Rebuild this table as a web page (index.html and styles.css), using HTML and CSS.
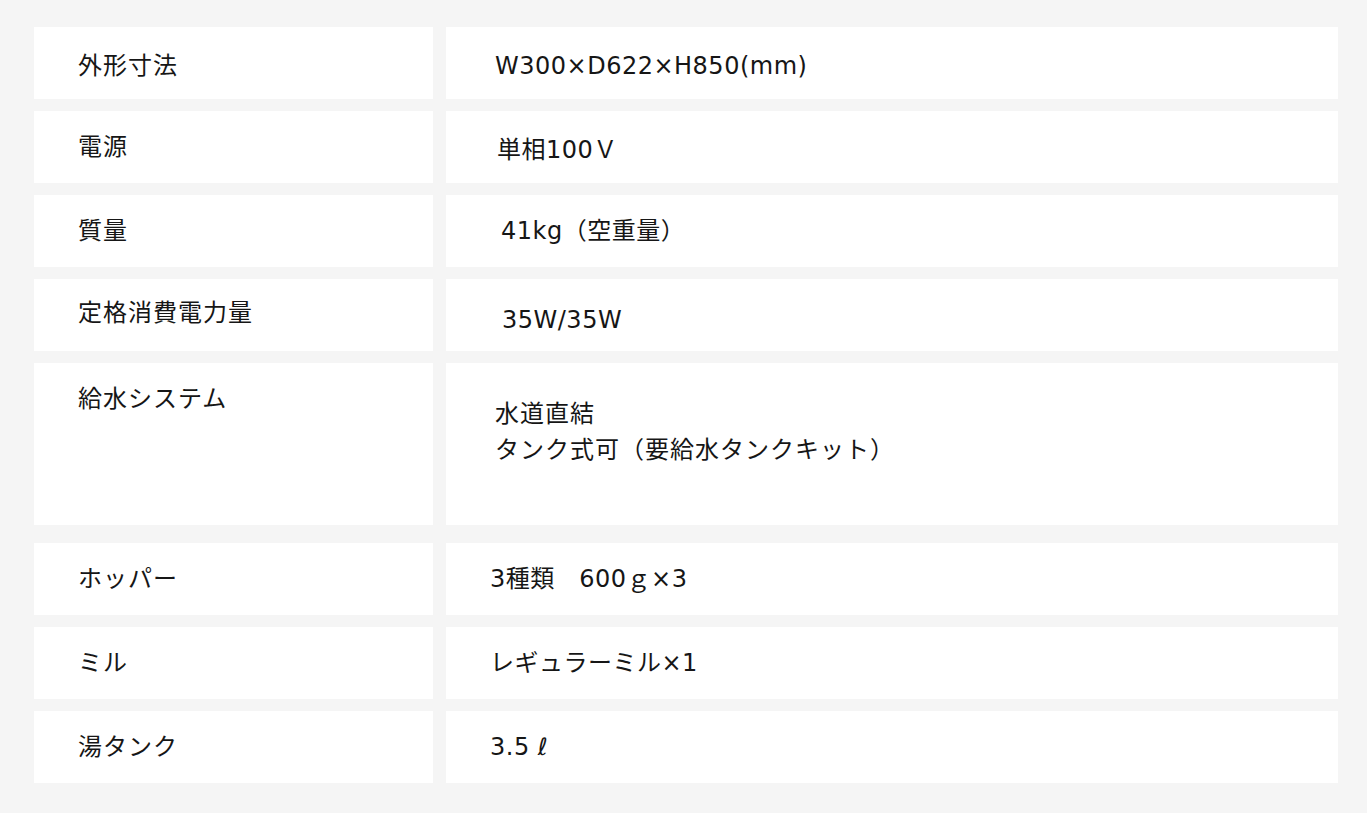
FILE: index.html
```html
<!DOCTYPE html>
<html lang="ja">
<head>
<meta charset="utf-8">
<title>仕様</title>
<link rel="stylesheet" href="styles.css">
</head>
<body>
<div class="spec">
  <div class="spec-row">
    <div class="cell label shift-down">外形寸法</div>
    <div class="cell value shift-down ind-5">W300×D622×H850(mm)</div>
  </div>
  <div class="spec-row">
    <div class="cell label">電源</div>
    <div class="cell value shift-down ind-7">単相100Ｖ</div>
  </div>
  <div class="spec-row">
    <div class="cell label">質量</div>
    <div class="cell value ind-11">41kg（空重量）</div>
  </div>
  <div class="spec-row">
    <div class="cell label shift-up">定格消費電力量</div>
    <div class="cell value shift-down2 ind-12">35W/35W</div>
  </div>
  <div class="spec-row spec-row--tall">
    <div class="cell label label--top">給水システム</div>
    <div class="cell value value--multi ind-5">水道直結<br>タンク式可（要給水タンクキット）</div>
  </div>
  <div class="spec-row">
    <div class="cell label">ホッパー</div>
    <div class="cell value">3種類　600ｇ×3</div>
  </div>
  <div class="spec-row">
    <div class="cell label">ミル</div>
    <div class="cell value">レギュラーミル×1</div>
  </div>
  <div class="spec-row">
    <div class="cell label">湯タンク</div>
    <div class="cell value">3.5 ℓ</div>
  </div>
</div>
</body>
</html>
```

FILE: styles.css
```css
html, body {
  margin: 0;
  padding: 0;
}
body {
  background: #f5f5f5;
  font-family: "DejaVu Sans", "Noto Sans CJK JP", sans-serif;
  color: #161616;
  font-size: 24px;
  letter-spacing: 0.5px;
}
.spec {
  display: flex;
  flex-direction: column;
  gap: 12px;
  padding: 27px 29px 30px 34px;
}
.spec-row {
  display: flex;
  gap: 13px;
}
.spec-row--tall {
  margin-bottom: 6px;
}
.cell {
  background: #fff;
  height: 72px;
  box-sizing: border-box;
  padding: 0 20px 0 44px;
  display: flex;
  align-items: center;
  line-height: 36px;
}
.label {
  width: 399px;
  flex: none;
  letter-spacing: 1px;
}
.value {
  flex: 1;
}
.spec-row--tall .cell {
  height: 162px;
}
.label--top {
  align-items: flex-start;
  padding-top: 18px;
}
.value--multi {
  display: block;
  padding-top: 33px;
  letter-spacing: 1px;
}
.shift-down { padding-top: 6px; }
.shift-down2 { padding-top: 10px; }
.shift-up { padding-bottom: 4px; }
.ind-5 { padding-left: 49px; }
.ind-7 { padding-left: 51px; }
.ind-11 { padding-left: 55px; }
.ind-12 { padding-left: 56px; }
```
